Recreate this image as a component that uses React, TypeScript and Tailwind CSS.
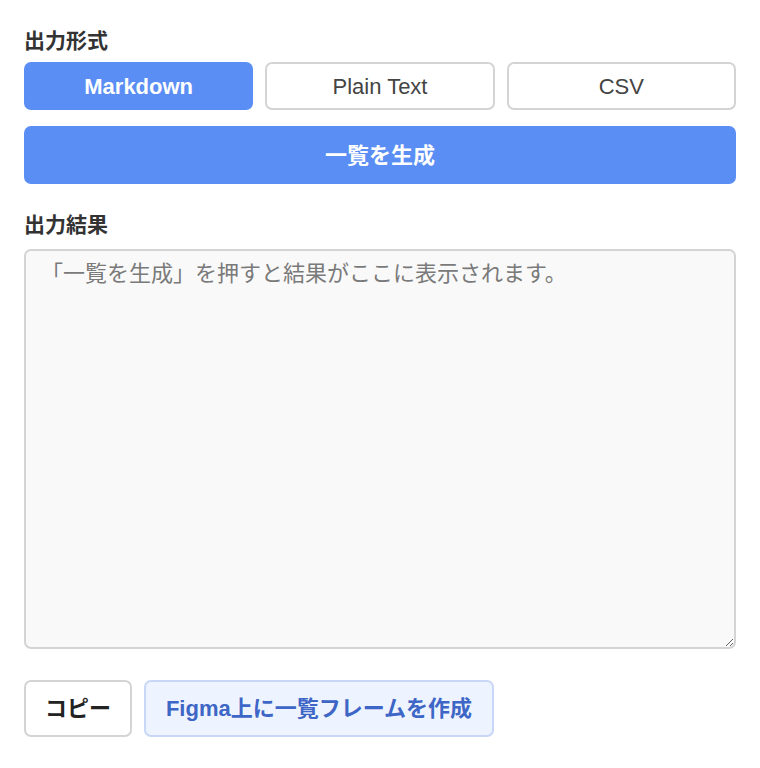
import { useState } from "react";

const formats = ["Markdown", "Plain Text", "CSV"];

export default function App() {
  const [format, setFormat] = useState("Markdown");
  const [result, setResult] = useState("");

  return (
    <div
      className="w-[760px] h-[768px] bg-white px-6 pt-[29px] text-[#333]"
      style={{ fontFamily: '"Liberation Sans", "Noto Sans CJK JP", sans-serif' }}
    >
      <div className="text-[21px] font-bold leading-[24px]">出力形式</div>
      <div className="mt-[9px] grid grid-cols-3 gap-3">
        {formats.map((f) => (
          <button
            key={f}
            onClick={() => setFormat(f)}
            className={
              f === format
                ? "h-[48px] rounded-[7px] bg-[#5a8ef5] text-white text-[22px] font-bold"
                : "h-[48px] rounded-[7px] border-2 border-[#d4d4d4] bg-white text-[#444] text-[22px]"
            }
          >
            {f}
          </button>
        ))}
      </div>
      <button className="mt-4 h-[58px] w-full rounded-[7px] bg-[#5a8ef5] text-white text-[22px] font-bold">
        一覧を生成
      </button>

      <div className="mt-[29px] text-[21px] font-bold leading-[24px]">出力結果</div>
      <textarea
        value={result}
        onChange={(e) => setResult(e.target.value)}
        placeholder="「一覧を生成」を押すと結果がここに表示されます。"
        className="mt-[12px] block h-[400px] w-full rounded-[7px] border-2 border-[#d4d4d4] bg-[#f9f9f9] px-[15px] pt-[8px] text-[22px] leading-[30px] text-[#333] placeholder:text-[#7a7a7a] outline-none"
        style={{ fontFamily: '"Liberation Sans", "Noto Sans CJK JP", sans-serif' }}
      />

      <div className="mt-[31px] flex gap-3">
        <button className="h-[57px] w-[108px] rounded-[7px] border-2 border-[#d4d4d4] bg-white text-[22px] font-bold text-[#222]">
          コピー
        </button>
        <button className="h-[57px] w-[350px] rounded-[7px] border-2 border-[#c7d7f5] bg-[#eef4ff] text-[22px] font-bold text-[#3d66c6]">
          Figma上に一覧フレームを作成
        </button>
      </div>
    </div>
  );
}
